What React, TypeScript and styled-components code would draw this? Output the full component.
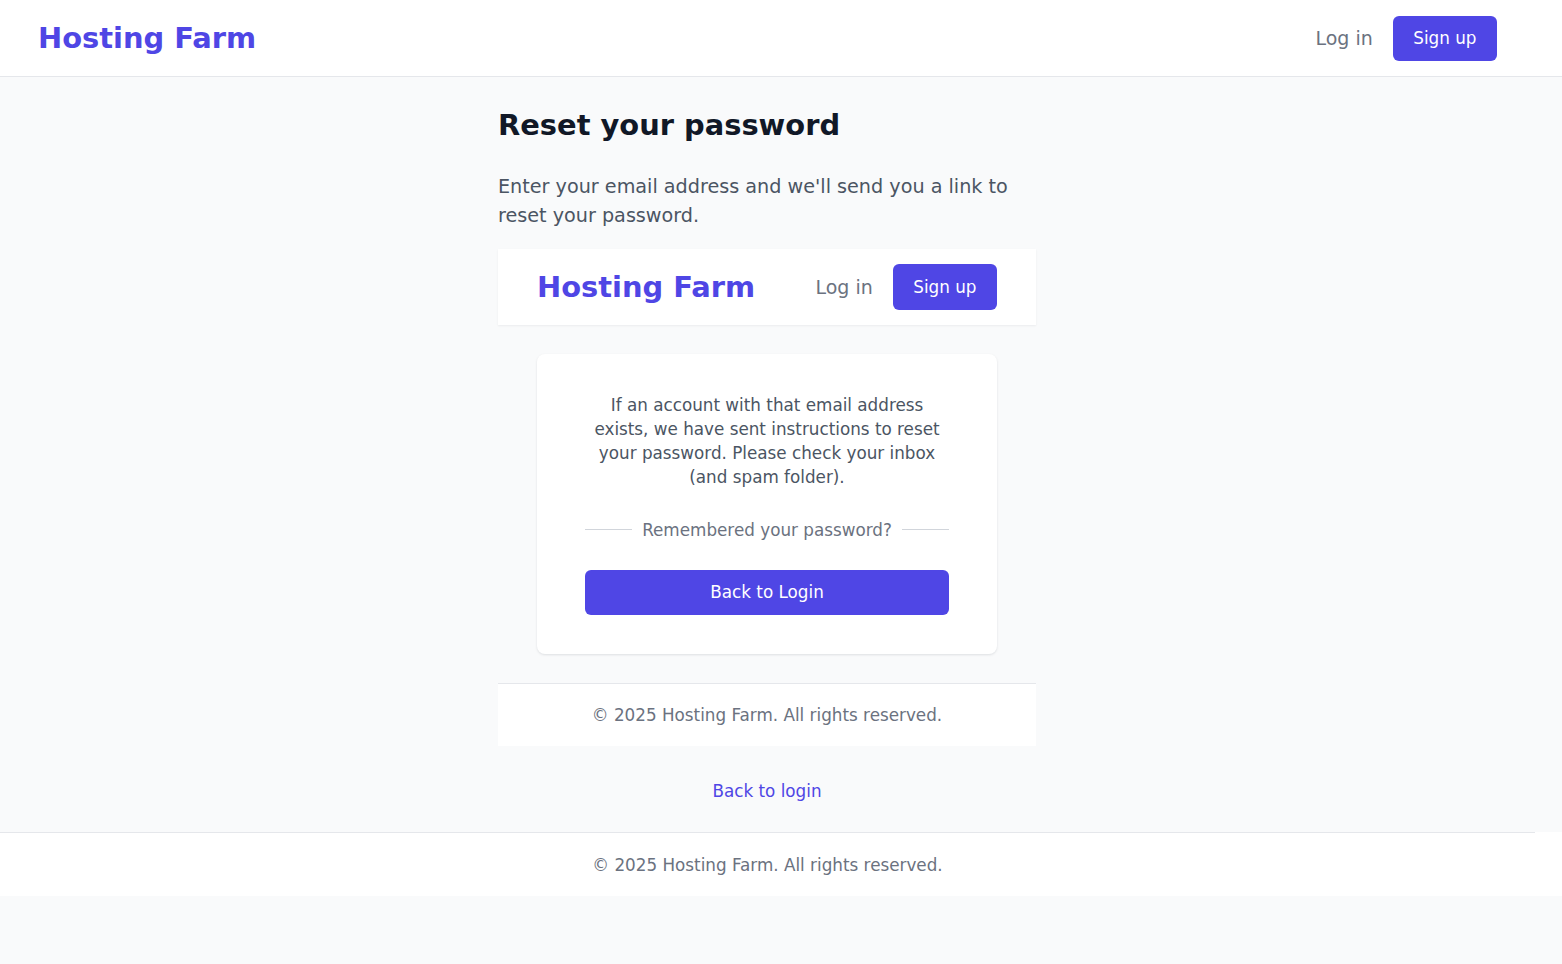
import React from "react";
import styled, { createGlobalStyle } from "styled-components";

const GlobalStyle = createGlobalStyle`
  html, body {
    margin: 0;
    padding: 0;
    background: #f9fafb;
    font-family: "DejaVu Sans", "Noto Sans", sans-serif;
  }
  * {
    box-sizing: border-box;
  }
`;

const PAGE_WIDTH = 1535;
const COLUMN_AREA = 1534;

const TopBar = styled.header`
  background: #ffffff;
  border-bottom: 1px solid #e5e7eb;
`;

const NavInner = styled.div<{ $inset: number }>`
  height: 76px;
  display: flex;
  align-items: center;
  justify-content: space-between;
  padding: 0 ${(p) => p.$inset}px;
`;

const TopInner = styled(NavInner)`
  width: ${PAGE_WIDTH}px;
`;

const Logo = styled.a`
  font-size: 28.9px;
  font-weight: 700;
  color: #4f46e5;
  text-decoration: none;
  line-height: 36px;
`;

const NavLinks = styled.nav`
  display: flex;
  align-items: center;
  gap: 20px;
`;

const LoginLink = styled.a`
  font-size: 19px;
  color: #6b7280;
  text-decoration: none;
  line-height: 28px;
`;

const SignUpButton = styled.a<{ $height: number }>`
  display: inline-flex;
  align-items: center;
  justify-content: center;
  height: ${(p) => p.$height}px;
  padding: 0 20.5px;
  border-radius: 6px;
  background: #4f46e5;
  color: #ffffff;
  font-size: 16.8px;
  text-decoration: none;
`;

const Main = styled.main`
  width: ${COLUMN_AREA}px;
  padding: 29.5px 0 28.5px;
`;

const Column = styled.div`
  width: 538px;
  margin: 0 auto;
`;

const Title = styled.h1`
  margin: 0;
  font-size: 28.9px;
  line-height: 36px;
  font-weight: 700;
  color: #111827;
`;

const Lead = styled.p`
  margin: 29.5px 0 0;
  font-size: 19.2px;
  line-height: 29.4px;
  color: #4b5563;
`;

const EmbeddedBar = styled.div`
  margin-top: 18px;
  background: #ffffff;
  box-shadow: 0 1px 2px rgba(15, 23, 42, 0.06);
`;

const Card = styled.section`
  width: 460px;
  margin: 29px auto 0;
  padding: 39px 48px 39px;
  background: #ffffff;
  border-radius: 8px;
  box-shadow: 0 1px 3px rgba(15, 23, 42, 0.08), 0 1px 2px rgba(15, 23, 42, 0.04);
`;

const Message = styled.p`
  margin: 0;
  font-size: 16.8px;
  line-height: 24px;
  color: #4b5563;
  text-align: center;
`;

const Divider = styled.div`
  margin-top: 29px;
  display: flex;
  align-items: center;
  gap: 10.5px;
  font-size: 16.8px;
  line-height: 24px;
  color: #6b7280;
  white-space: nowrap;

  &::before,
  &::after {
    content: "";
    flex: 1;
    height: 1px;
    background: #d1d5db;
  }
`;

const PrimaryButton = styled.button`
  display: flex;
  align-items: center;
  justify-content: center;
  width: 100%;
  height: 45px;
  margin-top: 27.7px;
  border: none;
  border-radius: 6px;
  background: #4f46e5;
  color: #ffffff;
  font-family: inherit;
  font-size: 16.8px;
  cursor: pointer;
`;

const EmbeddedFooter = styled.div`
  margin-top: 29px;
  padding: 19px 0;
  background: #ffffff;
  border-top: 1px solid #e5e7eb;
  text-align: center;
`;

const FooterText = styled.p`
  margin: 0;
  font-size: 16.8px;
  line-height: 24px;
  color: #6b7280;
`;

const BackLink = styled.a`
  display: block;
  margin-top: 33.5px;
  font-size: 16.8px;
  line-height: 24px;
  color: #4f46e5;
  text-align: center;
  text-decoration: none;
`;

const PageFooter = styled.footer`
  background: #ffffff;
`;

const PageFooterInner = styled.div`
  width: ${PAGE_WIDTH}px;
  padding: 20px 0 19px;
  border-top: 1px solid #e5e7eb;
  text-align: center;
`;

const NavContent: React.FC<{ buttonHeight: number }> = ({ buttonHeight }) => (
  <>
    <Logo href="#">Hosting Farm</Logo>
    <NavLinks>
      <LoginLink href="#">Log in</LoginLink>
      <SignUpButton href="#" $height={buttonHeight}>
        Sign up
      </SignUpButton>
    </NavLinks>
  </>
);

const COPYRIGHT = "© 2025 Hosting Farm. All rights reserved.";

export default function App() {
  return (
    <>
      <GlobalStyle />
      <TopBar>
        <TopInner $inset={38}>
          <NavContent buttonHeight={45} />
        </TopInner>
      </TopBar>

      <Main>
        <Column>
          <Title>Reset your password</Title>
          <Lead>
            Enter your email address and we'll send you a link to reset your
            password.
          </Lead>

          <EmbeddedBar>
            <NavInner $inset={39}>
              <NavContent buttonHeight={46} />
            </NavInner>
          </EmbeddedBar>

          <Card>
            <Message>
              If an account with that email address exists, we have sent
              instructions to reset your password. Please check your inbox (and
              spam folder).
            </Message>
            <Divider>Remembered your password?</Divider>
            <PrimaryButton type="button">Back to Login</PrimaryButton>
          </Card>

          <EmbeddedFooter>
            <FooterText>{COPYRIGHT}</FooterText>
          </EmbeddedFooter>

          <BackLink href="#">Back to login</BackLink>
        </Column>
      </Main>

      <PageFooter>
        <PageFooterInner>
          <FooterText>{COPYRIGHT}</FooterText>
        </PageFooterInner>
      </PageFooter>
    </>
  );
}
